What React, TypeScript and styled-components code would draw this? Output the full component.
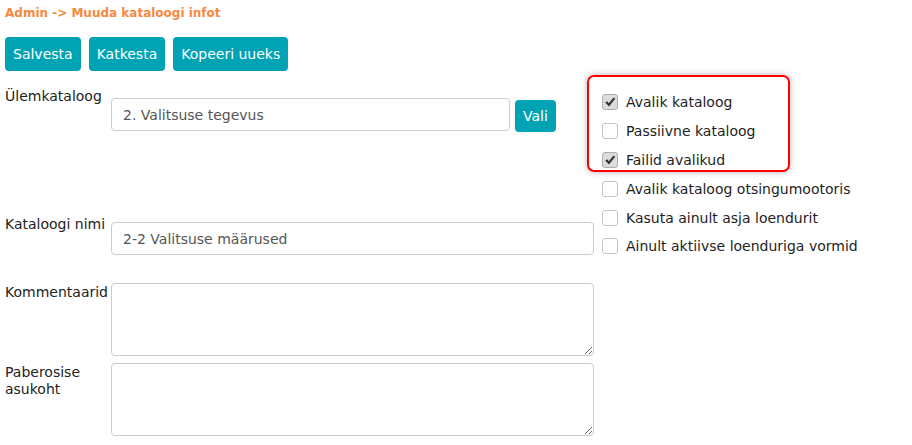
import React from 'react'
import styled, { createGlobalStyle } from 'styled-components'

const GlobalStyle = createGlobalStyle`
    body {
        margin:0;
        background:#fff;
        font-family:"DejaVu Sans", Verdana, sans-serif;
        font-size:14px;
        color:#333;
    }
`;
const Page = styled.div`
    padding:6px 5px 0 5px;
`;
const Breadcrumb = styled.div`
    font-size:12px;
    line-height:15px;
    font-weight:bold;
    color:#f7883e;
`;
const Toolbar = styled.div`
    display:flex;
    gap:8px;
    margin-top:16px;
`;
const Button = styled.button`
    height:34px;
    padding:0 8px;
    border:none;
    border-radius:4px;
    background:#00a3b4;
    color:#fff;
    font-family:inherit;
    font-size:14px;
`;
const SmallButton = styled(Button)`
    height:32px;
    padding:0 8px;
    margin-top:2px;
`;
const Main = styled.div`
    display:flex;
    margin-top:17px;
`;
const Left = styled.div`
    width:589px;
    display:flex;
    flex-direction:column;
`;
const FieldRow = styled.div<{ $top: number }>`
    display:grid;
    grid-template-columns:106px 1fr;
    align-items:start;
    margin-top:${p => p.$top}px;
`;
const Label = styled.label<{ $pad?: number }>`
    line-height:17px;
    color:#222;
    padding-top:${p => p.$pad || 0}px;
`;
const Field = styled.div<{ $top?: number }>`
    display:flex;
    gap:5px;
    margin-top:${p => p.$top || 0}px;
`;
const Input = styled.input<{ $w?: number }>`
    box-sizing:border-box;
    width:${p => (p.$w ? p.$w + 'px' : '100%')};
    height:33px;
    padding:0 11px;
    border:1px solid #ccc;
    border-radius:4px;
    font-family:inherit;
    font-size:14px;
    color:#555;
    outline:none;
`;
const TextArea = styled.textarea`
    box-sizing:border-box;
    width:100%;
    height:73px;
    border:1px solid #ccc;
    border-radius:4px;
    font-family:inherit;
    font-size:14px;
    display:block;
    outline:none;
`;
const Right = styled.div`
    position:relative;
    margin-left:8px;
`;
const Highlight = styled.div`
    position:absolute;
    left:-15px;
    top:-13px;
    width:203px;
    height:97px;
    box-sizing:border-box;
    border:2px solid #ff0000;
    border-radius:7px;
    box-shadow:0 0 6px rgba(0,0,0,0.3);
    pointer-events:none;
`;
const CheckRow = styled.div`
    display:flex;
    align-items:center;
    gap:8px;
    height:28.8px;
    color:#1e1e1e;
    white-space:nowrap;
`;
const Box = styled.span<{ $checked: boolean }>`
    box-sizing:border-box;
    width:16px;
    height:16px;
    border:1px solid ${p => (p.$checked ? '#adadad' : '#c4c4c4')};
    border-radius:3px;
    background:${p => (p.$checked ? '#dcdcdc' : '#fff')};
    display:flex;
    align-items:center;
    justify-content:center;
`;

const options = [
  { label: 'Avalik kataloog', checked: true },
  { label: 'Passiivne kataloog', checked: false },
  { label: 'Failid avalikud', checked: true },
  { label: 'Avalik kataloog otsingumootoris', checked: false },
  { label: 'Kasuta ainult asja loendurit', checked: false },
  { label: 'Ainult aktiivse loenduriga vormid', checked: false },
];

const Check = (props: { checked: boolean }) => (
  <Box $checked={props.checked}>
    {props.checked && (
      <svg width="12" height="12" viewBox="0 0 12 12">
        <path d="M1.2 6.6 L3.2 5.2 L4.8 7.3 L9.6 1.6 L11.2 2.8 L5 10.4 Z" fill="#333" />
      </svg>
    )}
  </Box>
);

const App = () => {
  return (
    <Page>
      <GlobalStyle />
      <Breadcrumb>Admin -&gt; Muuda kataloogi infot</Breadcrumb>
      <Toolbar>
        <Button>Salvesta</Button>
        <Button>Katkesta</Button>
        <Button>Kopeeri uueks</Button>
      </Toolbar>
      <Main>
        <Left>
          <FieldRow $top={0}>
            <Label>Ülemkataloog</Label>
            <Field $top={10}>
              <Input $w={399} defaultValue="2. Valitsuse tegevus" />
              <SmallButton>Vali</SmallButton>
            </Field>
          </FieldRow>
          <FieldRow $top={84}>
            <Label>Kataloogi nimi</Label>
            <Field $top={6}>
              <Input defaultValue="2-2 Valitsuse määrused" />
            </Field>
          </FieldRow>
          <FieldRow $top={28}>
            <Label $pad={1}>Kommentaarid</Label>
            <Field>
              <TextArea />
            </Field>
          </FieldRow>
          <FieldRow $top={7}>
            <Label $pad={1}>Paberosise asukoht</Label>
            <Field>
              <TextArea />
            </Field>
          </FieldRow>
        </Left>
        <Right>
          {options.map(o => (
            <CheckRow key={o.label}>
              <Check checked={o.checked} />
              {o.label}
            </CheckRow>
          ))}
          <Highlight />
        </Right>
      </Main>
    </Page>
  )
}

export default App
